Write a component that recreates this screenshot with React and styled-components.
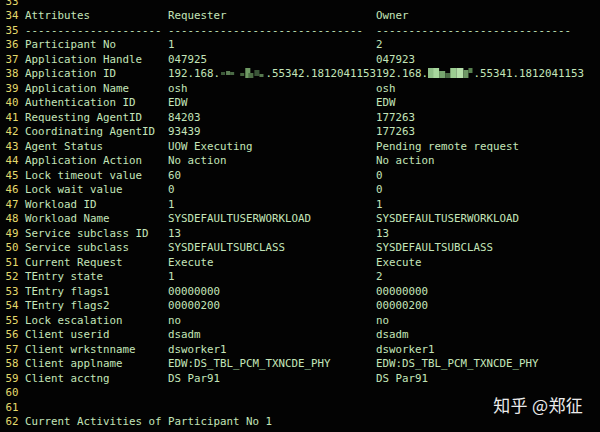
import React from 'react'
import styled, {createGlobalStyle} from 'styled-components'

const Global = createGlobalStyle`
    html, body {
        margin: 0;
        padding: 0;
        background: #030303;
    }
`

const Screen = styled.div`
    position: relative;
    width: 600px;
    height: 432px;
    overflow: hidden;
    background: #030303;
    font-family: "DejaVu Sans Mono", "Liberation Mono", monospace;
    font-size: 10.8px;
    line-height: 14.5px;
`
const Lines = styled.div`
    display: flex;
    flex-direction: column;
    margin-top: -5.5px;
    padding-left: 5.5px;
`
const Line = styled.div`
    display: flex;
    height: 14.5px;
    white-space: pre;
`
const LineNo = styled.span`
    flex: none;
    width: 3ch;
    color: #e3d96c;
`
const Field = styled.span`
    flex: none;
    width: ${p => (p.$w ? `${p.$w}ch` : 'auto')};
    color: #c4e5b9;
`
const Mosaic = styled.svg`
    display: inline-block;
    vertical-align: -1px;
    width: 7ch;
    height: 10px;
`
const Watermark = styled.div`
    position: absolute;
    right: 17px;
    top: 394px;
    color: #ececec;
    font-family: "Noto Sans CJK SC", "Noto Sans", sans-serif;
    font-size: 17px;
    line-height: 22px;
    letter-spacing: 0.3px;
`

const rows = [
    ['Attributes', 'Requester', 'Owner'],
    ['-'.repeat(21), '-'.repeat(30), '-'.repeat(30)],
    ['Participant No', '1', '2'],
    ['Application Handle', '047925', '047923'],
    ['Application ID', 'ip:55342', 'ip:55341'],
    ['Application Name', 'osh', 'osh'],
    ['Authentication ID', 'EDW', 'EDW'],
    ['Requesting AgentID', '84203', '177263'],
    ['Coordinating AgentID', '93439', '177263'],
    ['Agent Status', 'UOW Executing', 'Pending remote request'],
    ['Application Action', 'No action', 'No action'],
    ['Lock timeout value', '60', '0'],
    ['Lock wait value', '0', '0'],
    ['Workload ID', '1', '1'],
    ['Workload Name', 'SYSDEFAULTUSERWORKLOAD', 'SYSDEFAULTUSERWORKLOAD'],
    ['Service subclass ID', '13', '13'],
    ['Service subclass', 'SYSDEFAULTSUBCLASS', 'SYSDEFAULTSUBCLASS'],
    ['Current Request', 'Execute', 'Execute'],
    ['TEntry state', '1', '2'],
    ['TEntry flags1', '00000000', '00000000'],
    ['TEntry flags2', '00000200', '00000200'],
    ['Lock escalation', 'no', 'no'],
    ['Client userid', 'dsadm', 'dsadm'],
    ['Client wrkstnname', 'dsworker1', 'dsworker1'],
    ['Client applname', 'EDW:DS_TBL_PCM_TXNCDE_PHY', 'EDW:DS_TBL_PCM_TXNCDE_PHY'],
    ['Client acctng', 'DS Par91', 'DS Par91'],
]

// pixelated (censored) part of the address
const dimBlocks = [
    [1, 4, 4, 3, '#3d5a3a'], [6, 3, 4, 4, '#5d7f56'], [10, 4, 4, 3, '#4a6a45'],
    [20, 5, 4, 3, '#47663f'], [25, 0, 5, 10, '#6f9a64'], [28, 5, 5, 5, '#4d6e45'],
    [34, 2, 5, 6, '#3b5538'], [39, 6, 4, 3, '#56784f'],
]
const brightBlocks = [
    [0, 0, 5, 10, '#8fc088'], [5, 0, 6, 10, '#a8d79e'], [11, 3, 6, 7, '#77a56f'],
    [17, 5, 5, 5, '#4b6d46'], [22, 0, 6, 10, '#9ccd92'], [28, 0, 7, 10, '#b5e0aa'],
    [35, 2, 5, 8, '#6e9866'], [40, 0, 4, 5, '#57804f'],
]

const Pixelated = ({blocks}) => (
    <Mosaic viewBox="0 0 45 10" preserveAspectRatio="none">
        {blocks.map(([x, y, w, h, c], i) => (
            <rect key={i} x={x} y={y} width={w} height={h} fill={c} />
        ))}
    </Mosaic>
)

const Value = ({text, bright}) => {
    if (!text.startsWith('ip:')) return text
    return (
        <>
            192.168.
            <Pixelated blocks={bright ? brightBlocks : dimBlocks} />
            .{text.slice(3)}.1812041153
        </>
    )
}

const App = () => {
  return (
   <Screen>
        <Global />
        <Lines>
            <Line><LineNo>33</LineNo></Line>
            {rows.map(([attr, req, own], i) => (
                <Line key={attr}>
                    <LineNo>{34 + i}</LineNo>
                    <Field $w={22}>{attr}</Field>
                    <Field $w={32}><Value text={req} /></Field>
                    <Field><Value text={own} bright /></Field>
                </Line>
            ))}
            <Line><LineNo>60</LineNo></Line>
            <Line><LineNo>61</LineNo></Line>
            <Line><LineNo>62</LineNo><Field>Current Activities of Participant No 1</Field></Line>
            <Line><LineNo>63</LineNo></Line>
        </Lines>
        <Watermark>知乎 @郑征</Watermark>
   </Screen>
  )
}

export default App
